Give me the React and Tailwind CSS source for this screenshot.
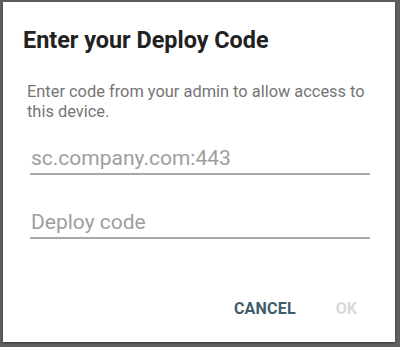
import React, { useState } from "react";

export default function App() {
  const [server, setServer] = useState("");
  const [code, setCode] = useState("");

  return (
    <div className="w-[400px] h-[347px] bg-[#5e5e5e] pl-[3px] pr-[5px] pt-[2px] pb-[5px] font-['Roboto',sans-serif]">
      <div className="h-full bg-white flex flex-col shadow-[0_1px_2px_rgba(0,0,0,0.4)]">
        <h1 className="pl-[20px] pt-[24px] text-[23.4px] leading-[28px] font-bold text-[#212121]">
          Enter your Deploy Code
        </h1>

        <p className="pl-[24px] pr-[20px] mt-[28px] text-[16.4px] leading-[20px] text-[#757575]">
          Enter code from your admin to allow access to this device.
        </p>

        {/* Server + code fields */}
        <div className="pl-[27px] pr-[25px] mt-[17px] flex flex-col gap-[28px]">
          <input
            type="text"
            value={server}
            onChange={(e) => setServer(e.target.value)}
            placeholder="sc.company.com:443"
            className="w-full h-[36px] pt-[4px] border-b-[2px] border-[#a8a8a8] text-[21px] px-[1px] outline-none placeholder:text-[#9e9e9e] text-[#212121]"
          />
          <input
            type="text"
            value={code}
            onChange={(e) => setCode(e.target.value)}
            placeholder="Deploy code"
            className="w-full h-[36px] pt-[4px] border-b-[2px] border-[#a8a8a8] text-[21px] px-[1px] outline-none placeholder:text-[#9e9e9e] text-[#212121]"
          />
        </div>

        <div className="mt-auto mb-[21px] flex justify-end pr-[38px] gap-[40px]">
          <button className="text-[16px] font-bold text-[#3f5b6c] tracking-[0.2px]">CANCEL</button>
          <button disabled className="text-[16px] font-bold text-[#d9d9d9]">OK</button>
        </div>
      </div>
    </div>
  );
}
